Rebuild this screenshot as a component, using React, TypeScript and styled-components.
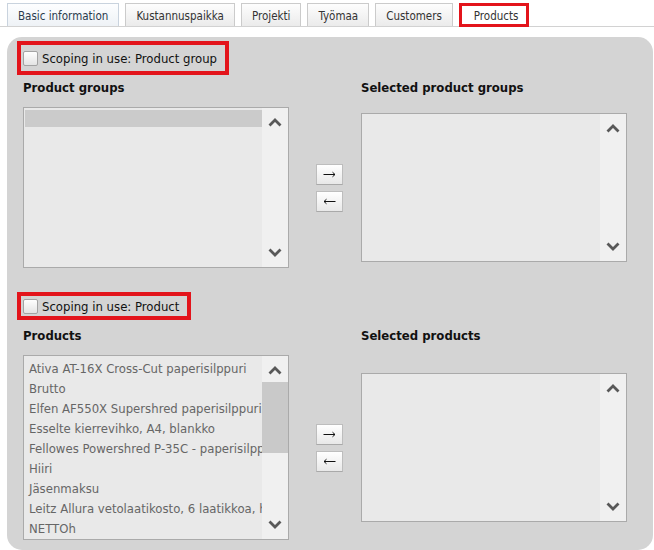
import React from "react";
import styled, { createGlobalStyle } from "styled-components";

const GlobalStyle = createGlobalStyle`
  html, body {
    margin: 0;
    padding: 0;
    background: #fff;
  }
  body {
    font-family: "DejaVu Sans Condensed", "DejaVu Sans", sans-serif;
    font-stretch: condensed;
    color: #222;
  }
`;

const Page = styled.div`
  width: 654px;
  height: 550px;
  overflow: hidden;
`;

const TabBar = styled.div`
  display: flex;
  gap: 6px;
  height: 23px;
  padding: 3px 0 0 7px;
  border-bottom: 1px solid #d2d2d2;
`;

const Tab = styled.div<{ $active?: boolean; $marked?: boolean }>`
  box-sizing: border-box;
  height: ${(p) => (p.$marked ? "24px" : "23px")};
  display: flex;
  align-items: center;
  padding: ${(p) => (p.$marked ? "1px 8px 0 12px" : "1px 10px 0")};
  font-size: 11.5px;
  color: ${(p) => (p.$active ? "#2b3b4e" : "#333")};
  border: ${(p) =>
    p.$marked ? "3px solid #e3141b" : p.$active ? "1px solid #c9d3de" : "1px solid #cbcbcb"};
  border-bottom: ${(p) => (p.$marked ? "3px solid #e3141b" : "none")};
  background: ${(p) =>
    p.$marked
      ? "#fff"
      : p.$active
      ? "linear-gradient(#fdfeff, #eef2f6)"
      : "linear-gradient(#fdfdfd, #ebebeb)"};
  white-space: nowrap;
`;

const Panel = styled.div`
  margin: 10px 1px 0 7px;
  padding: 4px 0 10px 10px;
  background: #d4d4d4;
  border-radius: 15px;
`;

const Section = styled.div<{ $top?: number }>`
  margin-top: ${(p) => p.$top ?? 0}px;
`;

const ScopeLabel = styled.label<{ $h: number; $mb: number }>`
  box-sizing: border-box;
  display: inline-flex;
  align-items: center;
  gap: 4px;
  height: ${(p) => p.$h}px;
  margin-bottom: ${(p) => p.$mb}px;
  padding: 0 8px 0 2px;
  border: 4px solid #e3141b;
  font-size: 13px;
  color: #111;
`;

const CheckBox = styled.span`
  box-sizing: border-box;
  width: 15px;
  height: 15px;
  border: 1px solid #a3a3a3;
  border-radius: 2px;
  background: linear-gradient(#fefefe, #e4e4e4);
`;

const Columns = styled.div<{ $center?: boolean }>`
  display: grid;
  grid-template-columns: 266px 72px 266px;
  align-items: ${(p) => (p.$center ? "center" : "start")};
  padding-left: 6px;
`;

const Heading = styled.div<{ $col: number }>`
  grid-column: ${(p) => p.$col};
  font-size: 13px;
  font-weight: bold;
  line-height: 16px;
  color: #111;
  margin-bottom: 11px;
`;

const ListBox = styled.div<{ $h: number }>`
  box-sizing: border-box;
  height: ${(p) => p.$h}px;
  display: grid;
  grid-template-columns: 1fr 26px;
  border: 1px solid #aaa;
  background: #e9e9e9;
`;

const Items = styled.div`
  overflow: hidden;
  padding: 2px 0 0 1px;
`;

const Item = styled.div<{ $selected?: boolean; $empty?: boolean }>`
  height: ${(p) => (p.$empty ? "17px" : "20px")};
  line-height: 22px;
  padding-left: 4px;
  font-size: 13px;
  color: #666;
  white-space: nowrap;
  background: ${(p) => (p.$selected ? "#cbcbcb" : "transparent")};
`;

const Track = styled.div`
  display: flex;
  flex-direction: column;
  align-items: center;
  padding: 10px 0;
  background: #f0f0f0;
`;

const Thumb = styled.div<{ $h: number }>`
  align-self: stretch;
  height: ${(p) => p.$h}px;
  margin-top: 7px;
  background: #c9c9c9;
`;

const Down = styled.div`
  margin-top: auto;
  display: flex;
`;

const Buttons = styled.div`
  display: flex;
  flex-direction: column;
  gap: 6px;
  padding-left: 27px;
`;

const MoveButton = styled.button`
  box-sizing: border-box;
  width: 27px;
  height: 21px;
  padding: 0;
  display: flex;
  align-items: center;
  justify-content: center;
  border: 1px solid #bdbdbd;
  border-bottom-color: #a9a9a9;
  background: linear-gradient(#ffffff, #e8e8e8);
  cursor: pointer;
`;

const Chevron = ({ up }: { up?: boolean }) => (
  <svg width="14" height="9" viewBox="0 0 14 9">
    <polyline
      points={up ? "1.5,7.5 7,2 12.5,7.5" : "1.5,1.5 7,7 12.5,1.5"}
      fill="none"
      stroke="#585858"
      strokeWidth="2.8"
    />
  </svg>
);

const Arrow = ({ left }: { left?: boolean }) => (
  <svg width="13" height="7" viewBox="0 0 13 7" style={left ? { transform: "scaleX(-1)" } : undefined}>
    <path d="M0.5 3.5H12 M9.5 1.2L12 3.5L9.5 5.8" fill="none" stroke="#111" strokeWidth="1" />
  </svg>
);

type ListProps = {
  height: number;
  items?: string[];
  selectedEmpty?: boolean;
  thumb?: number;
};

const List = (props: ListProps) => (
  <ListBox $h={props.height}>
    <Items>
      {props.selectedEmpty && <Item $selected $empty />}
      {props.items?.map((it) => (
        <Item key={it}>{it}</Item>
      ))}
    </Items>
    <Track>
      <Chevron up />
      {props.thumb ? <Thumb $h={props.thumb} /> : null}
      <Down>
        <Chevron />
      </Down>
    </Track>
  </ListBox>
);

const products = [
  "Ativa AT-16X Cross-Cut paperisilppuri",
  "Brutto",
  "Elfen AF550X Supershred paperisilppuri",
  "Esselte kierrevihko, A4, blankko",
  "Fellowes Powershred P-35C - paperisilppuri",
  "Hiiri",
  "Jäsenmaksu",
  "Leitz Allura vetolaatikosto, 6 laatikkoa, harmaa",
  "NETTOh",
];

const tabs = ["Basic information", "Kustannuspaikka", "Projekti", "Työmaa", "Customers"];

export default function App() {
  return (
    <Page>
      <GlobalStyle />
      <TabBar>
        {tabs.map((t, i) => (
          <Tab key={t} $active={i === 0}>
            {t}
          </Tab>
        ))}
        <Tab $marked>Products</Tab>
      </TabBar>
      <Panel>
        <Section>
          <ScopeLabel $h={34} $mb={5}>
            <CheckBox />
            Scoping in use: Product group
          </ScopeLabel>
          <Columns>
            <Heading $col={1}>Product groups</Heading>
            <Heading $col={3}>Selected product groups</Heading>
          </Columns>
          <Columns $center>
            <List height={161} selectedEmpty />
            <Buttons>
              <MoveButton>
                <Arrow />
              </MoveButton>
              <MoveButton>
                <Arrow left />
              </MoveButton>
            </Buttons>
            <List height={149} />
          </Columns>
        </Section>
        <Section $top={24}>
          <ScopeLabel $h={28} $mb={8}>
            <CheckBox />
            Scoping in use: Product
          </ScopeLabel>
          <Columns>
            <Heading $col={1}>Products</Heading>
            <Heading $col={3}>Selected products</Heading>
          </Columns>
          <Columns $center>
            <List height={185} items={products} thumb={71} />
            <Buttons>
              <MoveButton>
                <Arrow />
              </MoveButton>
              <MoveButton>
                <Arrow left />
              </MoveButton>
            </Buttons>
            <List height={149} />
          </Columns>
        </Section>
      </Panel>
    </Page>
  );
}
